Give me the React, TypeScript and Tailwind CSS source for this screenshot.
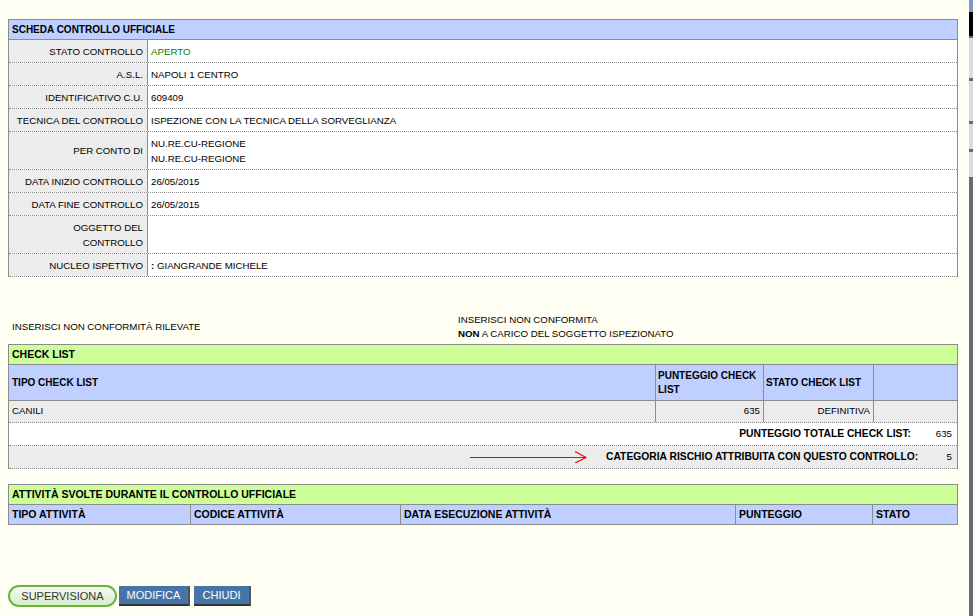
const rows: { label: React.ReactNode; value: React.ReactNode; h?: string }[] = [
  { label: "STATO CONTROLLO", value: <span className="text-[#008000]">APERTO</span> },
  { label: "A.S.L.", value: "NAPOLI 1 CENTRO" },
  { label: "IDENTIFICATIVO C.U.", value: "609409" },
  { label: "TECNICA DEL CONTROLLO", value: "ISPEZIONE CON LA TECNICA DELLA SORVEGLIANZA" },
  {
    label: "PER CONTO DI",
    value: (
      <>
        NU.RE.CU-REGIONE
        <br />
        NU.RE.CU-REGIONE
      </>
    ),
    h: "h-[38px]",
  },
  { label: "DATA INIZIO CONTROLLO", value: "26/05/2015" },
  { label: "DATA FINE CONTROLLO", value: "26/05/2015" },
  {
    label: (
      <>
        OGGETTO DEL
        <br />
        CONTROLLO
      </>
    ),
    value: "",
    h: "h-[38px]",
  },
  { label: "NUCLEO ISPETTIVO", value: <><b>:</b> GIANGRANDE MICHELE</> },
]

const font = "font-['Liberation_Sans',Arial,sans-serif]"
const line = "border-[#8c8c8c]"
const cell = `flex shrink-0 items-center border-r ${line}`

export default function App() {
  return (
    <div className={`flex h-[616px] w-[973px] bg-[#fffff3] text-[9.7px] text-black ${font}`}>
      <div className="flex w-[969px] flex-col px-2 pt-[19px]">
        {/* scheda */}
        <div className={`w-[950px] border-x border-t ${line}`}>
          <div className={`flex h-[20px] items-center border-b ${line} bg-[#bfcfff] px-[3px] text-[10px] font-bold`}>
            SCHEDA CONTROLLO UFFICIALE
          </div>
          {rows.map((r, i) => (
            <div key={i} className={`flex ${r.h ?? "h-[23px]"} border-b border-dotted ${line} leading-[15px]`}>
              <div className={`${cell} w-[139px] justify-end whitespace-nowrap bg-[#ececec] pr-[4px] text-right`}>
                <span>{r.label}</span>
              </div>
              <div className="flex flex-1 items-center bg-white pl-[3px]">
                <span>{r.value}</span>
              </div>
            </div>
          ))}
        </div>

        <div className="mt-[35px] flex h-[30px] items-center">
          <div className="w-[450px] pl-1 pt-[1px]">INSERISCI NON CONFORMITÀ RILEVATE</div>
          <div className="leading-[14px]">
            INSERISCI NON CONFORMITA
            <br />
            <b>NON</b> A CARICO DEL SOGGETTO ISPEZIONATO
          </div>
        </div>

        {/* check list */}
        <div className={`mt-[2px] w-[950px] border-x border-t ${line}`}>
          <div className={`flex h-[20px] items-center border-b ${line} bg-[#ccff99] px-[3px] text-[10.5px] font-bold`}>
            CHECK LIST
          </div>
          <div className={`flex h-[36px] border-b ${line} bg-[#bfcfff] text-[10px] font-bold leading-[14px]`}>
            <div className={`${cell} w-[647px] px-[3px]`}>TIPO CHECK LIST</div>
            <div className={`${cell} w-[108px] px-[2px]`}>PUNTEGGIO CHECK LIST</div>
            <div className={`${cell} w-[110px] px-[2px]`}>STATO CHECK LIST</div>
            <div className="flex-1" />
          </div>
          <div className={`flex h-[22px] border-b border-dotted ${line} bg-[#ececec]`}>
            <div className={`${cell} w-[647px] px-[3px]`}>CANILI</div>
            <div className={`${cell} w-[108px] justify-end px-[3px]`}>635</div>
            <div className={`${cell} w-[110px] justify-end px-[3px]`}>DEFINITIVA</div>
            <div className="flex-1" />
          </div>
          <div className={`flex h-[23px] items-center justify-end border-b border-dotted ${line} bg-white`}>
            <span className="text-[10.3px] font-bold">PUNTEGGIO TOTALE CHECK LIST:</span>
            <span className="w-[46px] pr-[5px] text-right">635</span>
          </div>
          <div className={`flex h-[23px] items-center border-b border-dotted ${line} bg-[#ececec]`}>
            <svg className="ml-[461px] mr-[18px]" width="118" height="12" viewBox="0 0 118 12">
              <line x1="0" y1="6.5" x2="116" y2="6.5" stroke="#ff0000" strokeWidth="1.2" />
              <path d="M105 0.5 L116 6.5 L105 12" fill="none" stroke="#ff0000" strokeWidth="1.2" />
            </svg>
            <span className="text-[10.3px] font-bold">CATEGORIA RISCHIO ATTRIBUITA CON QUESTO CONTROLLO:</span>
            <span className="ml-auto pr-[5px]">5</span>
          </div>
        </div>

        {/* attivita */}
        <div className={`mt-[15px] w-[950px] border ${line}`}>
          <div className={`flex h-[20px] items-center border-b ${line} bg-[#ccff99] px-[3px] text-[10.5px] font-bold`}>
            ATTIVITÀ SVOLTE DURANTE IL CONTROLLO UFFICIALE
          </div>
          <div className="flex h-[19px] bg-[#bfcfff] text-[10.5px] font-bold">
            <div className={`${cell} w-[182px] px-[3px]`}>TIPO ATTIVITÀ</div>
            <div className={`${cell} w-[210px] px-[3px]`}>CODICE ATTIVITÀ</div>
            <div className={`${cell} w-[335px] px-[3px]`}>DATA ESECUZIONE ATTIVITÀ</div>
            <div className={`${cell} w-[137px] px-[3px]`}>PUNTEGGIO</div>
            <div className="flex flex-1 items-center px-[3px]">STATO</div>
          </div>
        </div>

        <div className="mt-[60px] flex items-center gap-[2px]">
          <button className="h-[22px] w-[109px] rounded-full border-2 border-[#6cb43c] bg-gradient-to-b from-[#f4fbef] to-[#d8edcc] text-[11px] text-[#333]">
            SUPERVISIONA
          </button>
          <button className="h-[20px] w-[71px] border-r-2 border-b-2 border-r-[#555] border-b-[#333] bg-[#4575a8] text-[11px] text-white">
            MODIFICA
          </button>
          <button className="ml-[2px] h-[20px] w-[57px] border-r-2 border-b-2 border-r-[#555] border-b-[#333] bg-[#4575a8] text-[11px] text-white">
            CHIUDI
          </button>
        </div>
      </div>

      {/* adjacent window edge */}
      <div className="flex w-[4px] flex-col bg-[#6b6b6b]">
        <div className="h-[12px] bg-[#7b9cc0]" />
        <div className="h-[24px] bg-black" />
        <div className="mt-[2px] h-[40px] bg-[#dcdcdc]" />
        <div className="mt-[3px] h-[40px] bg-[#dcdcdc]" />
        <div className="mt-[3px] h-[25px] bg-[#dcdcdc]" />
        <div className="mt-[3px] h-[25px] bg-[#dcdcdc]" />
      </div>
    </div>
  )
}
